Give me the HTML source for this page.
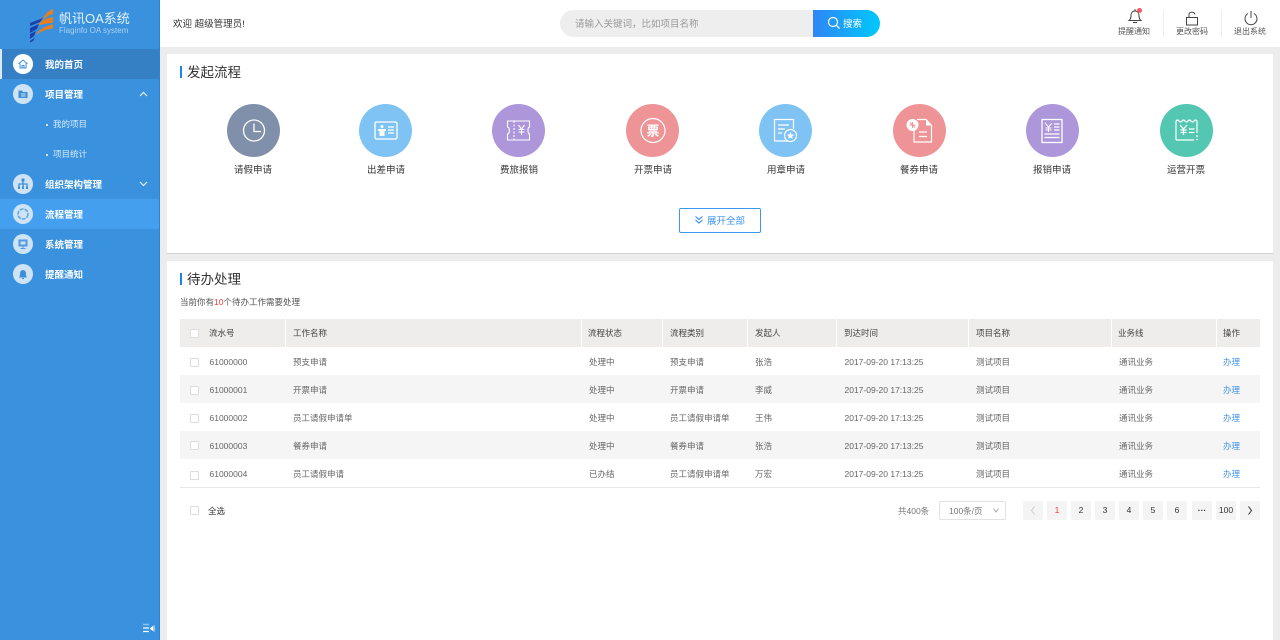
<!DOCTYPE html>
<html lang="zh-CN"><head><meta charset="utf-8"><title>帆讯OA系统</title>
<style>
*{box-sizing:border-box;margin:0;padding:0}
html,body{width:1280px;height:640px;overflow:hidden;background:#ececec;font-family:"Liberation Sans","Noto Sans CJK SC",sans-serif;color:#333}
.a{position:absolute;white-space:nowrap}
#side{position:absolute;left:0;top:0;width:160px;height:640px;background:#3a92de;border-right:1px solid #2b83d2}
.mi{position:absolute;left:0;width:159px;height:30px}
.mi .t{position:absolute;left:45px;top:1.500px;line-height:30px;font-size:9.500px;color:#fff;font-weight:700}
.mi svg.ic{position:absolute;left:13px;top:5px;width:20px;height:20px}
.sub{position:absolute;left:53px;font-size:8.500px;color:#d6e9fa;line-height:12px}
.dot{position:absolute;left:46px;width:2px;height:2px;background:#cfe5f9}
#head{position:absolute;left:160px;top:0;width:1120px;height:47px;background:#fff}
.card{position:absolute;left:167px;width:1106px;background:#fff}
.h2{position:absolute;font-size:13.500px;color:#333;line-height:18px}
.bar{position:absolute;width:2px;height:12px;background:#1e82f0}
.circ{position:absolute;top:104px;width:53px;height:53px}
.lbl{position:absolute;top:163.500px;width:80px;text-align:center;font-size:9.500px;line-height:14px;color:#333}
.th,.td{position:absolute;font-size:8.500px;line-height:12px}
.th{color:#444}.td{color:#666}
.cb{position:absolute;left:190px;width:9px;height:9px;border:1px solid #ddd;border-radius:1px;background:#fff}
.pg{position:absolute;top:501px;width:20px;height:19px;background:#f4f4f4;border-radius:2px;font-size:8.500px;line-height:19px;text-align:center;color:#333}
.act{position:absolute;font-size:8px;line-height:12px;color:#666;text-align:center}
</style></head><body>
<div id="side">
<svg class="a" style="left:28px;top:8px" width="30" height="36" viewBox="0 0 30 36">
<path d="M25 1 L25 6 C20 7 17 10 14 13 C16 7 20 3 25 1Z" fill="#ed7d1c"/>
<path d="M25 9 L25 15 C20 15 15 16 9 18 C12 14 18 10 25 9Z" fill="#ed7d1c"/>
<path d="M25 16.500 L25 20.500 C19 21 13 23 8 27 C10 22 17 18 25 16.500Z" fill="#ed7d1c"/>
<path d="M2 15 L15 10 L12 14 L2 18Z" fill="#1c3fae"/>
<path d="M2 20 L11 16 L9 21 L2 25Z" fill="#1c3fae"/>
<path d="M2 26 L8 23 L6 28 L2 31Z" fill="#1c3fae"/>
<path d="M2 33 L7 29.500 L5 33 L2 34.500Z" fill="#1c3fae"/>
</svg>
<div class="a" style="left:59px;top:10px;font-size:13px;line-height:18px;color:#e4f1fc">帆讯OA系统</div>
<div class="a" style="left:59px;top:26px;font-size:8px;line-height:10px;color:#a9d0f2">Flaginfo OA system</div>

<div class="mi" style="top:49px;background:#3580c4;border-left:2px solid #d8e9f8"><svg class="ic" style="left:11px" viewBox="0 0 20 20"><circle cx="10" cy="10" r="10" fill="#fff"/><path d="M5.500 10 L10 6 L14.500 10 M7 9.500 V14 H13 V9.500 M9 14 V11.500 H11 V14" fill="none" stroke="#3f93e0" stroke-width="1"/></svg><div class="t" style="left:43px">我的首页</div></div>
<div class="mi" style="top:79px"><svg class="ic" viewBox="0 0 20 20"><circle cx="10" cy="10" r="10" fill="#cfe3f6"/><path d="M5.500 6.500 H9 L10 8 H14.500 V14 H5.500Z" fill="#3f8fd8"/><path d="M8 10 H12.500 M8 12 H12.500" stroke="#cfe3f6"/></svg><div class="t">项目管理</div><svg class="a" style="left:139px;top:12px" width="9" height="6" viewBox="0 0 9 6"><path d="M1 5 L4.500 1.500 L8 5" fill="none" stroke="#e3f0fb" stroke-width="1.200"/></svg></div>
<div class="dot" style="top:124px"></div><div class="sub" style="top:118px">我的项目</div>
<div class="dot" style="top:154px"></div><div class="sub" style="top:148px">项目统计</div>
<div class="mi" style="top:169px"><svg class="ic" viewBox="0 0 20 20"><circle cx="10" cy="10" r="10" fill="#cfe3f6"/><path d="M10 5 V9 M6 14 V10 H14 V14 M10 9 V14" fill="none" stroke="#3f8fd8" stroke-width="1.300"/><path d="M8.500 4.500 H11.500 V7.500 H8.500Z M5 12.500 H7 V15 H5Z M9 12.500 H11 V15 H9Z M13 12.500 H15 V15 H13Z" fill="#3f8fd8"/></svg><div class="t">组织架构管理</div><svg class="a" style="left:139px;top:12px" width="9" height="6" viewBox="0 0 9 6"><path d="M1 1 L4.500 4.500 L8 1" fill="none" stroke="#e3f0fb" stroke-width="1.200"/></svg></div>
<div class="mi" style="top:199px;background:#44a0ef"><svg class="ic" viewBox="0 0 20 20"><circle cx="10" cy="10" r="10" fill="#cfe3f6"/><circle cx="10" cy="10" r="5" fill="none" stroke="#5fa5e4" stroke-width="1.500" stroke-dasharray="4 1"/></svg><div class="t">流程管理</div></div>
<div class="mi" style="top:229px"><svg class="ic" viewBox="0 0 20 20"><circle cx="10" cy="10" r="10" fill="#cfe3f6"/><path d="M5.500 5.500 H14.500 V12.500 H5.500Z" fill="#4f9ae0"/><path d="M7.500 14.500 H12.500 M10 12.500 V14.500" stroke="#4f9ae0"/><path d="M7.500 7.500 H12.500 V10.500 H7.500Z" fill="#cfe3f6"/></svg><div class="t">系统管理</div></div>
<div class="mi" style="top:259px"><svg class="ic" viewBox="0 0 20 20"><circle cx="10" cy="10" r="10" fill="#cfe3f6"/><path d="M6 13.500 C7 12 7 11 7 9.500 C7 7.500 8.500 6 10 6 C11.500 6 13 7.500 13 9.500 C13 11 13 12 14 13.500Z" fill="#3f8fd8"/><path d="M9 14.500 H11" stroke="#3f8fd8"/></svg><div class="t">提醒通知</div></div>
<svg class="a" style="left:143px;top:623px" width="12" height="11" viewBox="0 0 12 11"><path d="M0 1.500 H6" stroke="#8cc2f0" stroke-width="1.500"/><path d="M0 5 H6 M0 8.500 H6" stroke="#fff" stroke-width="1.300"/><path d="M7 5 L10 3 V8 L7 6Z M10.500 2.500 H11.500 V8.500 H10.500Z" fill="#fff"/></svg>
</div>

<div id="head"></div>
<div class="a" style="left:173px;top:18px;font-size:9.500px;line-height:14px;color:#333">欢迎 超级管理员!</div>
<div class="a" style="left:560px;top:10px;width:254px;height:27px;background:#eeeeee;border-radius:13.500px 0 0 13.500px"></div>
<div class="a" style="left:575px;top:18px;font-size:9.500px;line-height:14px;color:#999">请输入关键词，比如项目名称</div>
<div class="a" style="left:813px;top:10px;width:67px;height:27px;background:linear-gradient(90deg,#2f86f6,#00c8fb);border-radius:0 13.500px 13.500px 0"></div>
<svg class="a" style="left:827px;top:16px" width="14" height="14" viewBox="0 0 14 14"><circle cx="6" cy="6" r="4.500" fill="none" stroke="#fff" stroke-width="1.200"/><path d="M9.300 9.300 L12.500 12.500" stroke="#fff" stroke-width="1.300"/></svg>
<div class="a" style="left:843px;top:18px;font-size:9.500px;line-height:14px;color:#fff">搜索</div>

<svg class="a" style="left:1127px;top:8px" width="16" height="17" viewBox="0 0 16 17"><path d="M2 12.500 C4 11 4 9 4 7 C4 4.500 5.800 3 8 3 C10.200 3 12 4.500 12 7 C12 9 12 11 14 12.500Z" fill="none" stroke="#444" stroke-width="1"/><path d="M6 14.500 H10 M8 1 V3" stroke="#444"/></svg>
<div class="a" style="left:1137px;top:8px;width:5px;height:5px;border-radius:50%;background:#f25a63"></div>
<div class="act" style="left:1114px;top:25.500px;width:40px;color:#555">提醒通知</div>
<div class="a" style="left:1163px;top:10px;width:1px;height:26px;background:#eee"></div>
<svg class="a" style="left:1184px;top:11px" width="16" height="15" viewBox="0 0 16 15"><path d="M2.500 6.500 H13.500 V14 H2.500Z" fill="none" stroke="#444"/><path d="M5 6.500 V3.500 C5 0.500 10.500 0.500 11 3.500" fill="none" stroke="#444"/></svg>
<div class="act" style="left:1172px;top:25.500px;width:40px;color:#555">更改密码</div>
<div class="a" style="left:1221px;top:10px;width:1px;height:26px;background:#eee"></div>
<svg class="a" style="left:1243px;top:10px" width="16" height="16" viewBox="0 0 16 16"><path d="M5 3.500 A6 6 0 1 0 11 3.500" fill="none" stroke="#444"/><path d="M8 1 V8" stroke="#444"/></svg>
<div class="act" style="left:1230px;top:25.500px;width:40px;color:#555">退出系统</div>

<div class="card" style="top:54px;height:200px;border-bottom:1px solid #d2d2d2"></div>
<div class="bar" style="left:180px;top:66px"></div>
<div class="h2" style="left:187px;top:64px">发起流程</div>

<svg class="circ" style="left:227px" viewBox="0 0 53 53"><circle cx="26.500" cy="26.500" r="26.500" fill="#8090ab"/><circle cx="27" cy="26.500" r="10.500" fill="none" stroke="#fff" stroke-width="1.300"/><path d="M27 19.500 V27.500 H34" fill="none" stroke="#fff" stroke-width="1.300"/></svg>
<div class="lbl" style="left:213px">请假申请</div>
<svg class="circ" style="left:359px" viewBox="0 0 53 53"><circle cx="26.500" cy="26.500" r="26.500" fill="#7fc3f4"/><rect x="16" y="18" width="22" height="17" rx="1.500" fill="none" stroke="#fff" stroke-width="1.300"/><circle cx="23" cy="22.500" r="1.500" fill="#fff"/><path d="M19 25 H27 V27 H25.500 V32 H20.500 V27 H19Z" fill="#fff"/><path d="M29 23 H35 M29 26 H35 M29 29 H35" stroke="#fff" stroke-width="1.200"/></svg>
<div class="lbl" style="left:346px">出差申请</div>
<svg class="circ" style="left:492px" viewBox="0 0 53 53"><circle cx="26.500" cy="26.500" r="26.500" fill="#ae96da"/><path d="M15.500 17 H37.500 V23 C35.500 23.500 35.500 29.500 37.500 30 V36 H15.500 V30 C18 29.500 18 23.500 15.500 23Z" fill="none" stroke="#fff" stroke-width="1.100"/><path d="M22 17 V36" stroke="#fff" stroke-width="1.100" stroke-dasharray="2 1.500"/><path d="M26.500 21 L29.500 25 L32.500 21 M29.500 25 V31 M26.500 25.500 H32.500 M26.500 28 H32.500" fill="none" stroke="#fff" stroke-width="1.100"/></svg>
<div class="lbl" style="left:479px">费旅报销</div>
<svg class="circ" style="left:626px" viewBox="0 0 53 53"><circle cx="26.500" cy="26.500" r="26.500" fill="#ee9497"/><circle cx="27" cy="26.500" r="12" fill="none" stroke="#fff" stroke-width="1.200"/><text x="27" y="31.500" font-size="13" text-anchor="middle" fill="#fff" font-family="Noto Sans CJK SC" font-weight="700">票</text></svg>
<div class="lbl" style="left:613px">开票申请</div>
<svg class="circ" style="left:759px" viewBox="0 0 53 53"><circle cx="26.500" cy="26.500" r="26.500" fill="#7fc3f4"/><path d="M30 37 H15.500 V15.500 H34.500 V25" fill="none" stroke="#fff" stroke-width="1.200"/><path d="M19 21 H30 M19 25 H26 M19 29 H23" stroke="#fff" stroke-width="1.200"/><circle cx="31.500" cy="31.500" r="6" fill="#7fc3f4" stroke="#fff" stroke-width="1.200"/><path d="M31.500 28 L32.600 30.400 L35 30.700 L33.200 32.400 L33.700 34.800 L31.500 33.600 L29.300 34.800 L29.800 32.400 L28 30.700 L30.400 30.400Z" fill="#fff"/></svg>
<div class="lbl" style="left:746px">用章申请</div>
<svg class="circ" style="left:893px" viewBox="0 0 53 53"><circle cx="26.500" cy="26.500" r="26.500" fill="#ee9497"/><path d="M21 22 V38 H38.500 V21.500 L33 15.500 H24" fill="none" stroke="#fff" stroke-width="1.200"/><path d="M33 15.500 V21.500 H38.500Z" fill="#fff"/><circle cx="19.500" cy="21" r="6" fill="#fff"/><path d="M16.500 21 H22.500 M19.500 18 V24 M17 18.500 L22 23.500" stroke="#ee9497"/><path d="M26 28 H34 M26 32.500 H34" stroke="#fff" stroke-width="1.200"/></svg>
<div class="lbl" style="left:879px">餐券申请</div>
<svg class="circ" style="left:1026px" viewBox="0 0 53 53"><circle cx="26.500" cy="26.500" r="26.500" fill="#ae96da"/><rect x="16" y="15.500" width="20" height="23" fill="none" stroke="#fff" stroke-width="1.300"/><path d="M19 19 L22.500 23 L26 19 M22.500 23 V28 M19.500 24 H25.500 M19.500 26 H25.500" fill="none" stroke="#fff"/><path d="M28 20 H33.500 M28 23 H33.500 M28 26 H33.500 M18.500 30 H33.500 M18.500 33.500 H33.500" stroke="#fff" stroke-width="1.200"/></svg>
<div class="lbl" style="left:1012px">报销申请</div>
<svg class="circ" style="left:1160px" viewBox="0 0 53 53"><circle cx="26.500" cy="26.500" r="26.500" fill="#53c7b1"/><path d="M16 17 Q17.500 15 19 17 T22 17 T25 17 T28 17 T31 17 T34 17 T37 17 V29 M34 36 H16 Z" fill="none" stroke="#fff" stroke-width="1.200"/><path d="M16 17 V36" stroke="#fff" stroke-width="1.200"/><path d="M20 21 L23.500 25 L27 21 M23.500 25 V31 M20.500 26 H26.500 M20.500 28.500 H26.500 M29 25 H34.500 M29 28.500 H34.500" fill="none" stroke="#fff" stroke-width="1.200"/><path d="M36 32 H38 M36 35.500 H38" stroke="#fff" stroke-width="1.300"/></svg>
<div class="lbl" style="left:1146px">运营开票</div>

<div class="a" style="left:679px;top:208px;width:82px;height:25px;border:1px solid #3b97ee;border-radius:2px;background:#fff"></div>
<svg class="a" style="left:694px;top:215px" width="10" height="10" viewBox="0 0 10 10"><path d="M1.500 1.500 L5 4.500 L8.500 1.500 M1.500 5 L5 8 L8.500 5" fill="none" stroke="#2f8bea" stroke-width="1.100"/></svg>
<div class="a" style="left:707px;top:215px;font-size:9.500px;line-height:13px;color:#3b93ea">展开全部</div>

<div class="card" style="top:261px;height:379px"></div>
<div class="bar" style="left:180px;top:273px"></div>
<div class="h2" style="left:187px;top:271px">待办处理</div>
<div class="a" style="left:180px;top:296px;font-size:8.500px;line-height:12px;color:#555">当前你有<span style="color:#f23c3c">10</span>个待办工作需要处理</div>

<div class="a" style="left:180px;top:319px;width:1080px;height:28px;background:#eeedeb"></div>
<div class="a" style="left:180px;top:375px;width:1080px;height:28px;background:#f5f5f5"></div>
<div class="a" style="left:180px;top:431px;width:1080px;height:28px;background:#f5f5f5"></div>
<div class="a" style="left:180px;top:487px;width:1080px;height:1px;background:#e6e6e6"></div>
<div class="a" style="left:285px;top:319px;width:1px;height:28px;background:#fff"></div>
<div class="a" style="left:581px;top:319px;width:1px;height:28px;background:#fff"></div>
<div class="a" style="left:662px;top:319px;width:1px;height:28px;background:#fff"></div>
<div class="a" style="left:747px;top:319px;width:1px;height:28px;background:#fff"></div>
<div class="a" style="left:836px;top:319px;width:1px;height:28px;background:#fff"></div>
<div class="a" style="left:968px;top:319px;width:1px;height:28px;background:#fff"></div>
<div class="a" style="left:1111px;top:319px;width:1px;height:28px;background:#fff"></div>
<div class="a" style="left:1216px;top:319px;width:1px;height:28px;background:#fff"></div>

<div class="cb" style="top:329px"></div>
<div class="th" style="left:209px;top:327px">流水号</div><div class="th" style="left:293px;top:327px">工作名称</div><div class="th" style="left:588px;top:327px">流程状态</div><div class="th" style="left:670px;top:327px">流程类别</div><div class="th" style="left:755px;top:327px">发起人</div><div class="th" style="left:844px;top:327px">到达时间</div><div class="th" style="left:976px;top:327px">项目名称</div><div class="th" style="left:1118px;top:327px">业务线</div><div class="th" style="left:1223px;top:327px">操作</div>

<div class="cb" style="top:358px"></div>
<div class="td" style="left:209.500px;top:356px">61000000</div><div class="td" style="left:293px;top:356px">预支申请</div><div class="td" style="left:589px;top:356px">处理中</div><div class="td" style="left:670px;top:356px">预支申请</div><div class="td" style="left:755px;top:356px">张浩</div><div class="td" style="left:844.500px;top:356px">2017-09-20 17:13:25</div><div class="td" style="left:976px;top:356px">测试项目</div><div class="td" style="left:1119px;top:356px">通讯业务</div><div class="td" style="left:1223px;top:356px;color:#3f93ea">办理</div>

<div class="cb" style="top:386px"></div>
<div class="td" style="left:209.500px;top:384px">61000001</div><div class="td" style="left:293px;top:384px">开票申请</div><div class="td" style="left:589px;top:384px">处理中</div><div class="td" style="left:670px;top:384px">开票申请</div><div class="td" style="left:755px;top:384px">李威</div><div class="td" style="left:844.500px;top:384px">2017-09-20 17:13:25</div><div class="td" style="left:976px;top:384px">测试项目</div><div class="td" style="left:1119px;top:384px">通讯业务</div><div class="td" style="left:1223px;top:384px;color:#3f93ea">办理</div>

<div class="cb" style="top:414px"></div>
<div class="td" style="left:209.500px;top:412px">61000002</div><div class="td" style="left:293px;top:412px">员工请假申请单</div><div class="td" style="left:589px;top:412px">处理中</div><div class="td" style="left:670px;top:412px">员工请假申请单</div><div class="td" style="left:755px;top:412px">王伟</div><div class="td" style="left:844.500px;top:412px">2017-09-20 17:13:25</div><div class="td" style="left:976px;top:412px">测试项目</div><div class="td" style="left:1119px;top:412px">通讯业务</div><div class="td" style="left:1223px;top:412px;color:#3f93ea">办理</div>

<div class="cb" style="top:441px"></div>
<div class="td" style="left:209.500px;top:440px">61000003</div><div class="td" style="left:293px;top:440px">餐券申请</div><div class="td" style="left:589px;top:440px">处理中</div><div class="td" style="left:670px;top:440px">餐券申请</div><div class="td" style="left:755px;top:440px">张浩</div><div class="td" style="left:844.500px;top:440px">2017-09-20 17:13:25</div><div class="td" style="left:976px;top:440px">测试项目</div><div class="td" style="left:1119px;top:440px">通讯业务</div><div class="td" style="left:1223px;top:440px;color:#3f93ea">办理</div>

<div class="cb" style="top:471px"></div>
<div class="td" style="left:209.500px;top:468px">61000004</div><div class="td" style="left:293px;top:468px">员工请假申请</div><div class="td" style="left:589px;top:468px">已办结</div><div class="td" style="left:670px;top:468px">员工请假申请单</div><div class="td" style="left:755px;top:468px">万宏</div><div class="td" style="left:844.500px;top:468px">2017-09-20 17:13:25</div><div class="td" style="left:976px;top:468px">测试项目</div><div class="td" style="left:1119px;top:468px">通讯业务</div><div class="td" style="left:1223px;top:468px;color:#3f93ea">办理</div>

<div class="cb" style="top:506px"></div>
<div class="td" style="left:208px;top:505px;color:#333">全选</div>
<div class="td" style="left:898px;top:505px;color:#777">共400条</div>
<div class="a" style="left:939px;top:501px;width:67px;height:19px;border:1px solid #e2e2e2;border-radius:2px;background:#fff"></div>
<div class="td" style="left:949px;top:505px;color:#777">100条/页</div>
<svg class="a" style="left:993px;top:508px" width="6" height="5" viewBox="0 0 6 5"><path d="M0.500 0.500 L3 4 L5.500 0.500" fill="none" stroke="#999" stroke-width="0.800"/></svg>
<div class="pg" style="left:1023px"></div>
<svg class="a" style="left:1030px;top:506px" width="6" height="9" viewBox="0 0 6 9"><path d="M4.500 0.500 L1.500 4.500 L4.500 8.500" fill="none" stroke="#ccc" stroke-width="1"/></svg>
<div class="pg" style="left:1047px;color:#f23c3c">1</div>
<div class="pg" style="left:1071px">2</div>
<div class="pg" style="left:1095px">3</div>
<div class="pg" style="left:1119px">4</div>
<div class="pg" style="left:1143px">5</div>
<div class="pg" style="left:1167px">6</div>
<div class="pg" style="left:1192px;font-weight:700">···</div>
<div class="pg" style="left:1216px">100</div>
<div class="pg" style="left:1240px"></div>
<svg class="a" style="left:1247px;top:506px" width="6" height="9" viewBox="0 0 6 9"><path d="M1.500 0.500 L4.500 4.500 L1.500 8.500" fill="none" stroke="#333" stroke-width="1"/></svg>
</body></html>
